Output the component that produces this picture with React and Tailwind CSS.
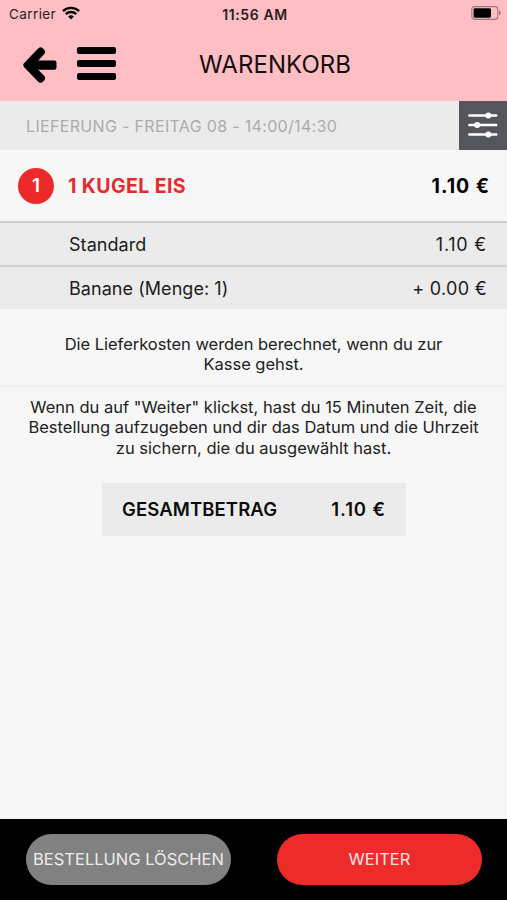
function WifiIcon() {
  return (
    <svg className="mb-px h-[14px] w-[18px]" viewBox="0 0 18 14" fill="none" stroke="#000" strokeWidth="2.3">
      <path d="M.9 5.1A11.6 11.6 0 0 1 17.1 5.1" />
      <path d="M3.8 8.1A7.5 7.5 0 0 1 14.2 8.1" />
      <path d="M9 13.6 6.1 10.6A4.2 4.2 0 0 1 11.9 10.6Z" fill="#000" stroke="none" />
    </svg>
  );
}

function BatteryIcon() {
  return (
    <svg className="h-[14px] w-[30px]" viewBox="0 0 30 14">
      <rect x=".8" y=".6" width="26" height="12.8" rx="3" fill="none" stroke="#9d777b" strokeWidth="1.1" />
      <rect x="2.6" y="2.3" width="17.4" height="9.4" rx="1.4" fill="#000" />
      <path d="M28 4.6q1.8.9 1.8 2.4T28 9.4Z" fill="#9d777b" />
    </svg>
  );
}

function BackIcon() {
  return (
    <svg className="mt-[2px] h-[36px] w-[34px]" viewBox="0 0 34 36">
      <path
        d="M15.4 1.2Q17.8-.8 20 1.4L21 2.4Q23.3 4.6 21.3 7L15.3 13.4H31.5Q33.5 13.4 33.5 15.6V20.6Q33.5 22.8 31.5 22.8H15.3L21.3 29.1Q23.3 31.5 21 33.7L20 34.7Q17.8 36.9 15.4 34.9L1.2 20.2Q-.8 18.1 1.2 15.9Z"
        fill="#000"
      />
    </svg>
  );
}

function MenuIcon() {
  return (
    <span className="mb-px flex h-[33px] w-[39px] flex-col justify-between">
      <span className="h-[7px] rounded-[2px] bg-black" />
      <span className="h-[7px] rounded-[2px] bg-black" />
      <span className="h-[7px] rounded-[2px] bg-black" />
    </span>
  );
}

function SlidersIcon() {
  return (
    <svg className="mb-[2px] h-[26px] w-[30px]" viewBox="0 0 30 26" stroke="#fff" strokeWidth="2.4" strokeLinecap="round" fill="#fff">
      <path d="M1.3 3.5h27M1.3 13h27M1.3 22.5h27" />
      <g stroke="none">
        <circle cx="20.3" cy="3.5" r="3" />
        <circle cx="9.2" cy="13" r="3" />
        <circle cx="20.3" cy="22.5" r="3" />
      </g>
    </svg>
  );
}

function OptionRow({ label, price, priceClass }) {
  return (
    <div className="flex h-[44px] items-center justify-between border-t-2 border-[#d0d0d0] bg-[#ebebeb] pr-[20px] pl-[69px] text-[18px] text-[#1c1c1c]">
      <span className="tracking-[0.05px]">{label}</span>
      <span className={priceClass}>{price}</span>
    </div>
  );
}

export default function App() {
  return (
    <div className="flex h-[900px] w-[507px] flex-col overflow-hidden whitespace-nowrap bg-[#f7f7f7] font-['Inter','Liberation_Sans',sans-serif] text-black">
      <header className="h-[101px] shrink-0 bg-[#ffbec4]">
        <div className="grid h-[27px] grid-cols-3 items-center pr-[6px] pl-[9px] text-[13.5px] text-[#2b1d1e]">
          <div className="flex items-center gap-[6px]">
            <span className="pt-px tracking-[0.4px]">Carrier</span>
            <WifiIcon />
          </div>
          <span className="pt-px text-center text-[14px] font-semibold tracking-[0.6px]">11:56 AM</span>
          <div className="flex justify-end pb-px">
            <BatteryIcon />
          </div>
        </div>
        <div className="flex h-[74px] items-center pl-[23px]">
          <BackIcon />
          <div className="ml-[20px]">
            <MenuIcon />
          </div>
          <h1 className="mt-[2px] ml-[83px] text-[24px] tracking-[0.05px] text-[#150e0f]">WARENKORB</h1>
        </div>
      </header>

      <div className="flex h-[49px] shrink-0 items-center justify-between bg-[#ebebeb] pl-[26px]">
        <span className="pt-px text-[16px] tracking-[0.33px] text-[#aaabad]">LIEFERUNG - FREITAG 08 - 14:00/14:30</span>
        <button className="flex h-[49px] w-[48px] items-center justify-center bg-[#55565b]">
          <SlidersIcon />
        </button>
      </div>

      <main className="flex flex-1 flex-col">
        <div className="flex h-[71px] items-center pr-[17px] pl-[18px] text-[19px] font-bold">
          <span className="flex size-[36px] items-center justify-center rounded-full bg-[#ed2a2a] pt-px font-semibold text-white">1</span>
          <span className="ml-[14px] flex-1 pt-[2px] text-[19.5px] tracking-[0.4px] text-[#e12c30]">1 KUGEL EIS</span>
          <span className="pt-[2px] text-[19.5px] tracking-[0.95px]">1.10 €</span>
        </div>
        <OptionRow label="Standard" price="1.10 €" priceClass="tracking-[0.75px]" />
        <OptionRow label="Banane (Menge: 1)" price="+ 0.00 €" priceClass="tracking-[0.3px]" />

        <div className="flex h-[78px] flex-col items-center border-b-2 border-[#efefef] pt-[25px] text-[16.5px] leading-[20.3px] tracking-[-0.04px] text-[#222]">
          <span>Die Lieferkosten werden berechnet, wenn du zur</span>
          <span>Kasse gehst.</span>
        </div>
        <div className="flex flex-col items-center pt-[10px] text-[16.5px] leading-[20.3px] text-[#222]">
          <span>Wenn du auf "Weiter" klickst, hast du 15 Minuten Zeit, die</span>
          <span>Bestellung aufzugeben und dir das Datum und die Uhrzeit</span>
          <span>zu sichern, die du ausgewählt hast.</span>
        </div>
        <div className="mt-[25px] ml-[102px] flex h-[53px] w-[304px] items-center justify-between bg-[#ebebeb] pr-[20px] pl-[20px] text-[18.5px] font-semibold text-[#0d0d0d]">
          <span className="tracking-[0.1px]">GESAMTBETRAG</span>
          <span className="tracking-[0.9px]">1.10 €</span>
        </div>
      </main>

      <footer className="flex h-[81px] shrink-0 justify-between bg-black pt-[15px] pr-[25px] pl-[26px] text-[16.5px]">
        <button className="h-[51px] w-[205px] rounded-full bg-[#818181] text-[#ececec]">BESTELLUNG LÖSCHEN</button>
        <button className="h-[51px] w-[205px] rounded-full bg-[#ed2b2b] text-[#ffe3e3]">WEITER</button>
      </footer>
    </div>
  );
}
